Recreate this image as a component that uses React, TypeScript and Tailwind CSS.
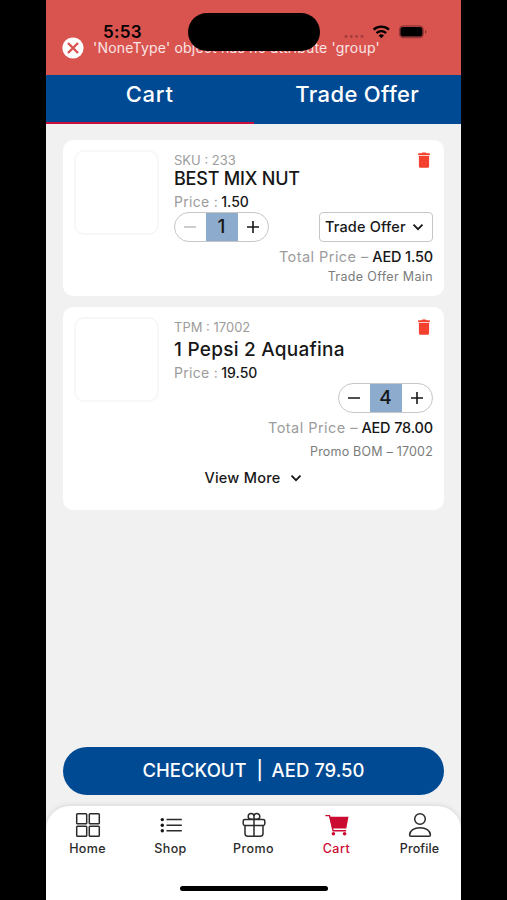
import { useState, type ReactNode } from 'react';
import { clsx } from 'clsx';

type Tab = 'cart' | 'offer';

const TrashIcon = () => (
    <svg viewBox="0 0 12 16" className="h-4 w-3" fill="#f4402f">
        <path d="M.2 1.3h3.2L4.2.4h3.6l.8.9h3.2v1.9H.2z" />
        <path d="M.9 4h10.2v10.2a1.5 1.5 0 0 1-1.5 1.5H2.4a1.5 1.5 0 0 1-1.5-1.5z" />
    </svg>
);

const ChevronIcon = () => (
    <svg viewBox="0 0 12 8" className="h-2 w-3" fill="none" stroke="#171717" strokeWidth="1.8">
        <path d="M1.5 1.7 6 6.2l4.5-4.5" />
    </svg>
);

const Stepper = ({ value, min = 1 }: { value: number; min?: number }) => {
    const [count, setCount] = useState(value);
    const disabled = count <= min;

    return (
        <div className="flex h-[30px] w-[95px] overflow-hidden rounded-full border border-[#c6c6c6]">
            <button
                aria-label="Decrease"
                className={clsx('flex flex-1 items-center justify-center', disabled ? 'text-[#bdbdbd]' : 'text-[#171717]')}
                onClick={() => !disabled && setCount(count - 1)}
            >
                <svg viewBox="0 0 12 12" className="h-3 w-3" stroke="currentColor" strokeWidth="1.5">
                    <path d="M0 6h12" />
                </svg>
            </button>
            <span className="flex w-8 items-center justify-center bg-[#8cabcd] text-[19px] font-medium">{count}</span>
            <button aria-label="Increase" className="flex flex-1 items-center justify-center text-[#171717]" onClick={() => setCount(count + 1)}>
                <svg viewBox="0 0 12 12" className="h-3 w-3" stroke="currentColor" strokeWidth="1.6">
                    <path d="M0 6h12M6 0v12" />
                </svg>
            </button>
        </div>
    );
};

const CartCard = ({ code, children, footer }: { code: string; children: ReactNode; footer?: ReactNode }) => (
    <div className="rounded-[10px] bg-white pl-[11px] pr-[11px] pt-[10px]">
        <div className="flex">
            <div className="h-[85px] w-[85px] shrink-0 rounded-[10px] border-2 border-[#f7f7f7]" />
            <div className="ml-[15px] min-w-0 flex-1">
                <div className="flex h-5 justify-between">
                    <span className="text-[13px] leading-5 text-[#9c9c9c]">{code}</span>
                    <div className="mr-[3px] pt-[2px]">
                        <TrashIcon />
                    </div>
                </div>
                {children}
            </div>
        </div>
        {footer}
    </div>
);

const Price = ({ value }: { value: string }) => (
    <div className="text-[14px] leading-4 tracking-[0.3px] text-[#9c9c9c]">
        Price : <span className="-ml-px tracking-[0px] font-medium text-[#171717]">{value}</span>
    </div>
);

const Total = ({ value }: { value: string }) => (
    <div className="text-right text-[14.5px] leading-4 tracking-[0.45px] text-[#9c9c9c]">
        Total Price – <span className="-ml-px tracking-[-0.15px] font-medium text-[#171717]">{value}</span>
    </div>
);

const HomeIcon = () => (
    <svg viewBox="0 0 26 26" className="h-[26px] w-[26px]" fill="none" stroke="#2b2b2b" strokeWidth="1.5">
        <rect x="1.7" y="1.7" width="10" height="10" rx=".8" />
        <rect x="14.3" y="1.7" width="10" height="10" rx=".8" />
        <rect x="1.7" y="14.3" width="10" height="10" rx=".8" />
        <rect x="14.3" y="14.3" width="10" height="10" rx=".8" />
    </svg>
);

const ShopIcon = () => (
    <svg viewBox="0 0 26 26" className="h-[26px] w-[26px]" fill="none" stroke="#2b2b2b" strokeWidth="1.5">
        <path d="M8.5 7.6h15.3M8.5 13.2h15.3M8.5 18.8h15.3" />
        <g fill="#171717" stroke="none">
            <circle cx="4.3" cy="7.6" r="1.7" />
            <circle cx="4.3" cy="13.2" r="1.7" />
            <circle cx="4.3" cy="18.8" r="1.7" />
        </g>
    </svg>
);

const GiftIcon = () => (
    <svg viewBox="0 0 26 26" className="h-[26px] w-[26px]" fill="none" stroke="#2b2b2b" strokeWidth="1.5">
        <rect x="2.2" y="7.4" width="21.6" height="6" rx="1.6" />
        <path d="M4 13.4v8.2a2.6 2.6 0 0 0 2.6 2.6h12.8a2.6 2.6 0 0 0 2.6-2.6v-8.2M13 7.4v16.8" />
        <path d="M13 7.2V4.4a2.9 2.9 0 1 0-2.9 2.9H13ZM13 7.2V4.4a2.9 2.9 0 1 1 2.9 2.9H13Z" />
    </svg>
);

const CartIcon = () => (
    <svg viewBox="0 0 26 26" className="h-[26px] w-[26px]" fill="none" stroke="#cb0a32">
        <path d="M1.4 3.6h4.1l3.6 15.2h13" strokeWidth="1.4" />
        <path d="M5.5 4.8h19l-2.2 11.6H8.2z" fill="#cb0a32" stroke="none" />
        <circle cx="9.4" cy="21.8" r="1.8" fill="#cb0a32" stroke="none" />
        <circle cx="20.6" cy="21.8" r="1.8" fill="#cb0a32" stroke="none" />
    </svg>
);

const ProfileIcon = () => (
    <svg viewBox="0 0 26 26" className="h-[26px] w-[26px]" fill="none" stroke="#2b2b2b" strokeWidth="1.5">
        <circle cx="13" cy="7" r="5.3" />
        <path d="M3.8 24.2a1.2 1.2 0 0 1-1.2-1.3c.3-4.2 4.4-7.2 10.4-7.2s10.1 3 10.4 7.2a1.2 1.2 0 0 1-1.2 1.3z" />
    </svg>
);

const NAV_ITEMS = [
    { label: 'Home', icon: HomeIcon, text: 'tracking-[0.35px]' },
    { label: 'Shop', icon: ShopIcon, text: 'tracking-[0.35px]' },
    { label: 'Promo', icon: GiftIcon, text: 'tracking-[0.4px]' },
    { label: 'Cart', icon: CartIcon, text: 'tracking-[0.5px]' },
    { label: 'Profile', icon: ProfileIcon, text: 'tracking-[0.1px]' },
];

const StatusIcons = () => (
    <svg viewBox="0 0 86 16" className="h-4 w-[86px]">
        <g fill="#000" opacity=".25">
            <circle cx="5" cy="12.5" r="1.4" />
            <circle cx="10.3" cy="12.5" r="1.4" />
            <circle cx="15.6" cy="12.5" r="1.4" />
            <circle cx="21" cy="12.5" r="1.4" />
        </g>
        <g fill="none" stroke="#000" strokeWidth="2.3">
            <path d="M32.6 5.7a11.4 11.4 0 0 1 15.4 0" />
            <path d="M35.5 9.1a7 7 0 0 1 9.6 0" />
        </g>
        <path d="M37.6 11.4a4 4 0 0 1 5.4 0l-2.7 2.8z" />
        <rect x="58.4" y="1.8" width="24" height="12" rx="3.8" fill="#000" fillOpacity=".12" stroke="#000" strokeOpacity=".3" />
        <rect x="59.4" y="3.1" width="22" height="9.4" rx="2.8" />
        <path d="M84 6v3.7c1.9-.5 1.9-3.2 0-3.7z" opacity=".4" />
    </svg>
);

export default function App() {
    const [tab, setTab] = useState<Tab>('cart');

    return (
        <div className="flex h-[900px] w-[507px] justify-center overflow-hidden bg-black font-['Inter',sans-serif] text-[#171717]">
            <div className="relative flex w-[415px] flex-col bg-[#f1f1f1]">
                {/* Error banner */}
                <div className="flex h-[75px] items-center bg-[#d9534f] pl-[16px] pt-[21px]">
                    <svg viewBox="0 0 22 22" className="h-[22px] w-[22px] shrink-0">
                        <circle cx="11" cy="11" r="10.6" fill="#fff" />
                        <path d="m6 6 10 10m0-10L6 16" stroke="#d9534f" strokeWidth="2.4" />
                    </svg>
                    <span className="ml-[9px] whitespace-nowrap text-[14px] leading-5 tracking-[0.21px] text-white/85">'NoneType' object has no attribute 'group'</span>
                </div>

                {/* Status bar sits over the banner */}
                <div className="absolute left-[57px] top-[21px] text-[17px] font-semibold leading-[22px] tracking-[0.3px] text-black">5:53</div>
                <div className="absolute left-[142px] top-[13px] h-[38px] w-[132px] rounded-full bg-black" />
                <div className="absolute left-[295px] top-[24px]">
                    <StatusIcons />
                </div>

                {/* Tabs */}
                <div className="grid h-[49px] grid-cols-2 bg-[#004a94] text-[22px] font-medium leading-[38px] text-white">
                    <button
                        className={clsx('border-b-2 tracking-[0.8px]', tab === 'cart' ? 'border-[#c9103c]' : 'border-transparent')}
                        onClick={() => setTab('cart')}
                    >
                        <span className="block h-[47px]">Cart</span>
                    </button>
                    <button
                        className={clsx('border-b-2 tracking-[0.35px]', tab === 'offer' ? 'border-[#c9103c]' : 'border-transparent')}
                        onClick={() => setTab('offer')}
                    >
                        <span className="block h-[47px]">Trade Offer</span>
                    </button>
                </div>

                {/* Cart items */}
                <div className="flex flex-1 flex-col gap-[11px] pl-[17px] pr-[17px] pt-4">
                    <CartCard code="SKU : 233">
                        <div className="mt-px text-[18px] font-medium leading-4 tracking-[-0.2px]">BEST MIX NUT</div>
                        <div className="mt-[7px]">
                            <Price value="1.50" />
                        </div>
                        <div className="mt-[2px] flex items-start justify-between">
                            <Stepper value={1} />
                            <button className="flex h-[30px] w-[114px] items-center justify-between rounded border border-[#c6c6c6] pl-[5px] pr-[8px]">
                                <span className="whitespace-nowrap text-[14.5px] font-medium leading-5 tracking-[0.15px]">Trade Offer</span>
                                <ChevronIcon />
                            </button>
                        </div>
                        <div className="mt-[7px]">
                            <Total value="AED 1.50" />
                        </div>
                        <div className="mb-[11px] mt-1 text-right text-[12.5px] leading-4 tracking-[0.35px] text-[#7b7b7b]">Trade Offer Main</div>
                    </CartCard>

                    <CartCard
                        code="TPM : 17002"
                        footer={
                            <button className="mb-6 mt-[10px] flex w-full items-center justify-center gap-[9px] pr-px">
                                <span className="text-[14.5px] font-medium leading-4 tracking-[0.25px]">View More</span>
                                <ChevronIcon />
                            </button>
                        }
                    >
                        <div className="mt-[3px] text-[19px] font-medium leading-5 tracking-[0.25px]">1 Pepsi 2 Aquafina</div>
                        <div className="mt-[5px]">
                            <Price value="19.50" />
                        </div>
                        <div className="mt-[2px] flex justify-end">
                            <Stepper value={4} />
                        </div>
                        <div className="mt-[7px]">
                            <Total value="AED 78.00" />
                        </div>
                        <div className="mt-2 text-right text-[12.5px] leading-4 tracking-[0.2px] text-[#7b7b7b]">Promo BOM – 17002</div>
                    </CartCard>
                </div>

                <button className="mx-[17px] mb-[11px] flex h-[48px] shrink-0 items-center justify-center gap-[10px] rounded-full bg-[#004a94] pb-px text-[18.5px] font-medium text-white">
                    <span>CHECKOUT</span>
                    <span className="w-[5px]">|</span>
                    <span>AED 79.50</span>
                </button>

                {/* Bottom navigation */}
                <nav className="relative h-[94px] shrink-0 rounded-t-[24px] bg-white pt-[6px] shadow-[0_-1px_5px_rgba(0,0,0,0.10)]">
                    <div className="grid grid-cols-5">
                        {NAV_ITEMS.map(item => {
                            const Icon = item.icon;
                            return (
                                <button key={item.label} className="flex flex-col items-center">
                                    <Icon />
                                    <span className={clsx('mt-[3px] text-[12.5px] font-medium leading-4', item.text, item.label === 'Cart' ? 'text-[#cb0a32]' : 'text-[#2b2b2b]')}>
                                        {item.label}
                                    </span>
                                </button>
                            );
                        })}
                    </div>
                    <div className="absolute bottom-[9px] left-[134px] h-[5px] w-[148px] rounded-full bg-black" />
                </nav>
            </div>
        </div>
    );
}
